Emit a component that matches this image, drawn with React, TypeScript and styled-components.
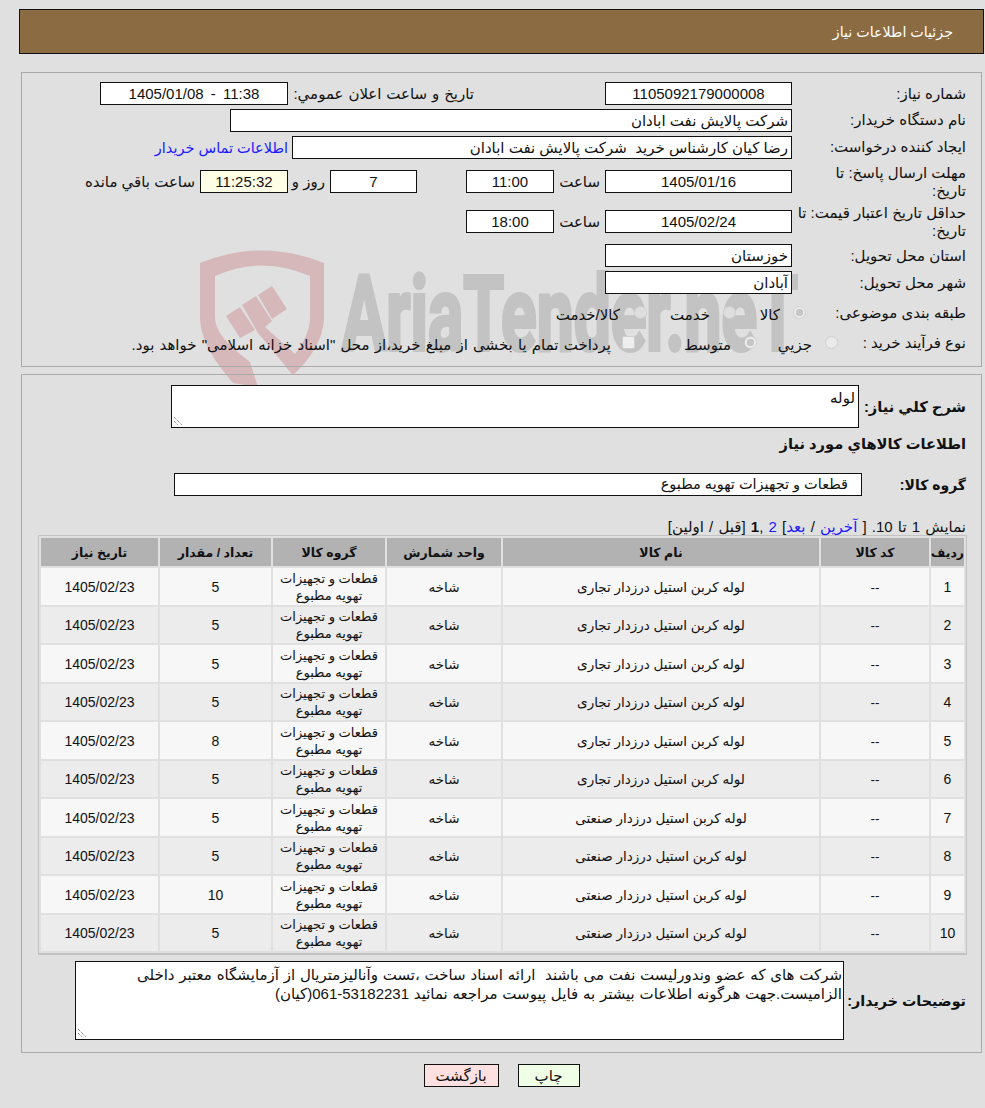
import React from "react";
import styled, { createGlobalStyle } from "styled-components";

const FONT = `"Liberation Sans", "DejaVu Sans", sans-serif`;

const Global = createGlobalStyle`
  html, body { margin: 0; padding: 0; background: #e0e0e0; }
  body { font-family: ${FONT}; font-size: 15px; color: #111; }
`;

const Page = styled.div`
  position: relative;
  width: 985px;
  height: 1108px;
  direction: rtl;
  padding: 9px 1px 0 19px;
  box-sizing: border-box;
  overflow: hidden;
`;
const Header = styled.div`
  height: 45px;
  background: #8b6c42;
  border: 1px solid #111;
  box-sizing: border-box;
  color: #fff;
  font-size: 14.25px;
  line-height: 44px;
  padding-right: 30px;
`;
const Panel = styled.section<{ $top: number }>`
  position: relative;
  box-sizing: border-box;
  margin: ${(p) => p.$top}px 2px 0 2px;
  border: 1px solid #aaa;
`;
const Top = styled(Panel)`
  height: 295px;
  padding: 9px 15px 0 0;
`;
const Row = styled.div<{ $h: number }>`
  display: flex;
  align-items: center;
  height: ${(p) => p.$h}px;
`;
const Label = styled.div<{ $w?: number }>`
  width: ${(p) => p.$w || 174}px;
  flex: none;
  line-height: 18px;
`;
const RadioLabel = styled(Label)`
  margin-bottom: 4px;
`;
const Field = styled.div<{ $w: number; $center?: boolean; $bg?: string; $m?: number; $ltr?: boolean }>`
  width: ${(p) => p.$w}px;
  height: 23px;
  flex: none;
  box-sizing: border-box;
  border: 1px solid #111;
  background: ${(p) => p.$bg || "#fff"};
  text-align: ${(p) => (p.$center ? "center" : "right")};
  direction: ${(p) => (p.$ltr ? "ltr" : "rtl")};
  word-spacing: ${(p) => (p.$ltr ? "3px" : "0")};
  line-height: 21px;
  padding: 0 3px;
  margin-right: ${(p) => p.$m || 0}px;
  white-space: pre;
  overflow: hidden;
`;
const GroupField = styled(Field)`
  font-size: 14.5px;
  padding-right: 13px;
`;
const Inline = styled.span<{ $m?: number; $w?: number }>`
  margin-right: ${(p) => p.$m || 0}px;
  ${(p) => (p.$w ? `width:${p.$w}px;` : "")}
  flex: none;
  white-space: nowrap;
`;
const Notice = styled(Inline)`
  word-spacing: 1px;
`;
const WideInline = styled(Inline)`
  word-spacing: 0.7px;
`;
const BottomRow = styled(Row)`
  align-items: flex-end;
  & > ${Label}, & > ${Inline} {
    margin-bottom: 3px;
  }
`;
const Blue = styled.a`
  color: #1a1aff;
  font-size: 14.5px;
`;
const Radio = styled.span<{ $checked?: boolean }>`
  width: 13px;
  height: 13px;
  flex: none;
  border-radius: 50%;
  border: 1px solid #cfcfcf;
  background: ${(p) => (p.$checked ? "radial-gradient(circle, #c6c6c6 0 3.5px, #ececec 4px)" : "rgba(240,240,240,.6)")};
  box-sizing: border-box;
  margin-bottom: 6px;
`;
const Check = styled.span`
  width: 13px;
  height: 13px;
  flex: none;
  border-radius: 2px;
  border: 1px solid #cfcfcf;
  background: #eeeeee;
  box-sizing: border-box;
  margin-bottom: 6px;
`;
const Watermark = styled.svg`
  position: absolute;
  left: 195px;
  top: 245px;
  z-index: 0;
`;
const Layer = styled.div`
  position: relative;
  z-index: 1;
`;
const Bottom = styled(Panel)`
  height: 679px;
  padding: 10px 15px 0 16px;
`;
const BoldLabel = styled.div<{ $w?: number; $fs?: number }>`
  font-weight: bold;
  font-size: ${(p) => p.$fs || 14.7}px;
  flex: none;
  white-space: nowrap;
  width: ${(p) => p.$w || 0}px;
`;
const Area = styled.div<{ $w: number; $h: number }>`
  position: relative;
  flex: none;
  box-sizing: border-box;
  width: ${(p) => p.$w}px;
  height: ${(p) => p.$h}px;
  background: #fff;
  border: 1px solid #111;
  padding: 2px 3px;
  line-height: 19px;
  white-space: pre-wrap;
`;
const NotesArea = styled(Area)`
  padding: 3px 1px;
  word-spacing: 0.6px;
`;
const Grip = styled.svg`
  position: absolute;
  left: 1px;
  bottom: 1px;
`;
const Pager = styled.div`
  margin-top: 6px;
  height: 20px;
  line-height: 20px;
  white-space: nowrap;
  word-spacing: 1px;
  a { color: #1a1aff; }
`;
const Table = styled.table`
  border-collapse: separate;
  border-spacing: 2px;
  border: 1px solid #c2c2c2;
  border-width: 1px 1px 2px 1px;
  width: 928px;
  table-layout: fixed;
  margin: -2px -1px 0 0;
  padding: 0;
`;
const Th = styled.th<{ $w: number }>`
  width: ${(p) => p.$w}px;
  height: 28px;
  padding: 0;
  background: #b2b2b2;
  font-size: 12.5px;
  font-weight: bold;
  text-align: center;
  white-space: nowrap;
`;
const Td = styled.td`
  height: 34.5px;
  padding: 2px 0 0;
  text-align: center;
  line-height: 17px;
  font-size: 13.5px;
`;
const NumTd = styled(Td)`
  font-size: 14px;
`;
const GroupTd = styled(Td)`
  height: 35.5px;
  padding: 1px 0 0;
  font-size: 13px;
`;
const Tr = styled.tr<{ $odd: boolean }>`
  background: ${(p) => (p.$odd ? "#f7f7f7" : "#ececec")};
`;
const Notes = styled(Row)`
  margin-top: 6px;
`;
const Buttons = styled.div`
  display: flex;
  justify-content: center;
  gap: 19px;
  margin-top: 11px;
`;
const Btn = styled.button<{ $bg: string; $w: number }>`
  width: ${(p) => p.$w}px;
  height: 23px;
  box-sizing: border-box;
  border: 1px solid #111;
  background: ${(p) => p.$bg};
  font: 15px ${FONT};
  color: #111;
  padding: 0;
`;

const rows: [string, string, string, string][] = [
  ["1", "لوله کربن استیل درزدار تجاری", "5", "1405/02/23"],
  ["2", "لوله کربن استیل درزدار تجاری", "5", "1405/02/23"],
  ["3", "لوله کربن استیل درزدار تجاری", "5", "1405/02/23"],
  ["4", "لوله کربن استیل درزدار تجاری", "5", "1405/02/23"],
  ["5", "لوله کربن استیل درزدار تجاری", "8", "1405/02/23"],
  ["6", "لوله کربن استیل درزدار تجاری", "5", "1405/02/23"],
  ["7", "لوله کربن استیل درزدار صنعتی", "5", "1405/02/23"],
  ["8", "لوله کربن استیل درزدار صنعتی", "5", "1405/02/23"],
  ["9", "لوله کربن استیل درزدار صنعتی", "10", "1405/02/23"],
  ["10", "لوله کربن استیل درزدار صنعتی", "5", "1405/02/23"],
];

const GripIcon = () => (
  <Grip width="10" height="10" viewBox="0 0 10 10">
    <path d="M1 1 9 9M1 5 5 9" stroke="#666" strokeWidth="1" strokeDasharray="1 1" fill="none" />
  </Grip>
);

export default function App() {
  return (
    <Page>
      <Global />
      <Watermark width="620" height="145" viewBox="195 245 620 145">
        <path
          fill="#d6b8ba"
          fillRule="evenodd"
          d="M200 263 Q262 238 324 263 V317 C324 340 308 362 293 375 L285 366 C298 352 310 335 310 317 V276 Q262 255 215 276 V317 C215 335 235 350 250 362 L258 387 L233 383 C215 362 200 340 200 317Z"
        />
        <path fill="#d6b8ba" d="M226 316 240 307 255 330 240 338Z" />
        <path fill="#d6b8ba" d="M258 295 272 286 287 309 272 319Z" />
        <path fill="#d6b8ba" d="M242 305 256 296 272 321 265 327 304 362 293 375 258 333Z" />
        <text x="342" y="350" fontFamily="Roboto" fontWeight="bold" fontSize="104" fill="#c3c3c3" stroke="#c3c3c3" strokeWidth="4" textLength="456" lengthAdjust="spacingAndGlyphs" direction="ltr">AriaTender.neT</text>
      </Watermark>
      <Layer>
        <Header>جزئيات اطلاعات نياز</Header>
        <Top $top={18}>
          <Row $h={23}>
            <Label>شماره نياز:</Label>
            <Field $w={187} $center>1105092179000008</Field>
            <WideInline $m={131} $w={181}>تاريخ و ساعت اعلان عمومي:</WideInline>
            <Field $w={188} $m={5} $center $ltr>1405/01/08 - 11:38</Field>
          </Row>
          <BottomRow $h={27}>
            <Label>نام دستگاه خريدار:</Label>
            <Field $w={562}>شرکت پالایش نفت ابادان</Field>
          </BottomRow>
          <BottomRow $h={27}>
            <Label>ایجاد کننده درخواست:</Label>
            <Field $w={500}>رضا کیان کارشناس خرید  شرکت پالایش نفت ابادان</Field>
            <Inline $m={4}><Blue>اطلاعات تماس خريدار</Blue></Inline>
          </BottomRow>
          <Row $h={45}>
            <Label>مهلت ارسال پاسخ: تا<br />تاريخ:</Label>
            <Field $w={187} $center>1405/01/16</Field>
            <Inline $m={5} $w={46}>ساعت</Inline>
            <Field $w={88} $center>11:00</Field>
            <Field $w={87} $m={49} $center>7</Field>
            <Inline $m={5} $w={37}>روز و</Inline>
            <Field $w={88} $center $bg="#ffffe8">11:25:32</Field>
            <Inline $m={5}>ساعت باقي مانده</Inline>
          </Row>
          <Row $h={35}>
            <Label>حداقل تاريخ اعتبار قيمت: تا<br />تاريخ:</Label>
            <Field $w={187} $center>1405/02/24</Field>
            <Inline $m={5} $w={46}>ساعت</Inline>
            <Field $w={88} $center>18:00</Field>
          </Row>
          <Row $h={33}>
            <Label>استان محل تحویل:</Label>
            <Field $w={187}>خوزستان</Field>
          </Row>
          <Row $h={21}>
            <Label>شهر محل تحویل:</Label>
            <Field $w={187}>آبادان</Field>
          </Row>
          <Row $h={44}>
            <RadioLabel $w={160}>طبقه بندی موضوعی:</RadioLabel>
            <Radio $checked />
            <Inline $m={13} $w={44.5}>کالا</Inline>
            <Radio />
            <Inline $m={12.5} $w={63.5}>خدمت</Inline>
            <Radio />
            <Inline $m={13.5}>کالا/خدمت</Inline>
          </Row>
          <Row $h={16}>
            <RadioLabel $w={128}>نوع فرآیند خرید :</RadioLabel>
            <Radio />
            <Inline $m={13} $w={55}>جزيي</Inline>
            <Radio $checked />
            <Inline $m={13} $w={96}>متوسط</Inline>
            <Check />
            <Notice $m={11}>پرداخت تمام یا بخشی از مبلغ خرید،از محل "اسناد خزانه اسلامی" خواهد بود.</Notice>
          </Row>
        </Top>
        <Bottom $top={7}>
          <Row $h={43}>
            <BoldLabel $w={107}>شرح کلي نياز:</BoldLabel>
            <Area $w={688} $h={43}>لوله<GripIcon /></Area>
          </Row>
          <Row $h={30}>
            <BoldLabel $w={400}>اطلاعات کالاهاي مورد نياز</BoldLabel>
          </Row>
          <Row $h={53}>
            <BoldLabel $w={104} $fs={14}>گروه کالا:</BoldLabel>
            <GroupField $w={688}>قطعات و تجهیزات تهویه مطبوع</GroupField>
          </Row>
          <Pager>
            نمایش 1 تا 10. [ <a>آخرین</a> / <a>بعد</a>] <a>2</a> ,<b>1</b> [قبل / اولین]
          </Pager>
          <Table>
            <thead>
              <tr>
                <Th $w={33}>رديف</Th>
                <Th $w={108}>کد کالا</Th>
                <Th $w={316}>نام کالا</Th>
                <Th $w={114}>واحد شمارش</Th>
                <Th $w={112}>گروه کالا</Th>
                <Th $w={111}>تعداد / مقدار</Th>
                <Th $w={117}>تاريخ نياز</Th>
              </tr>
            </thead>
            <tbody>
              {rows.map((r, i) => (
                <Tr key={r[0]} $odd={i % 2 === 0}>
                  <NumTd>{r[0]}</NumTd>
                  <Td>--</Td>
                  <Td>{r[1]}</Td>
                  <Td>شاخه</Td>
                  <GroupTd>قطعات و تجهیزات<br />تهویه مطبوع</GroupTd>
                  <NumTd>{r[2]}</NumTd>
                  <NumTd>{r[3]}</NumTd>
                </Tr>
              ))}
            </tbody>
          </Table>
          <Notes $h={79}>
            <BoldLabel $w={122} $fs={14.3}>توضیحات خریدار:</BoldLabel>
            <NotesArea $w={769} $h={79}>
              {"شرکت های که عضو وندورلیست نفت می باشند  ارائه اسناد ساخت ،تست وآنالیزمتریال از آزمایشگاه معتبر داخلی"}
              <br />
              {"الزامیست.جهت هرگونه اطلاعات بیشتر به فایل پیوست مراجعه نمائید 53182231-061(کیان)"}
              <GripIcon />
            </NotesArea>
          </Notes>
        </Bottom>
        <Buttons>
          <Btn $bg="#efffe6" $w={62}>چاپ</Btn>
          <Btn $bg="#ffe0e0" $w={75}>بازگشت</Btn>
        </Buttons>
      </Layer>
    </Page>
  );
}
